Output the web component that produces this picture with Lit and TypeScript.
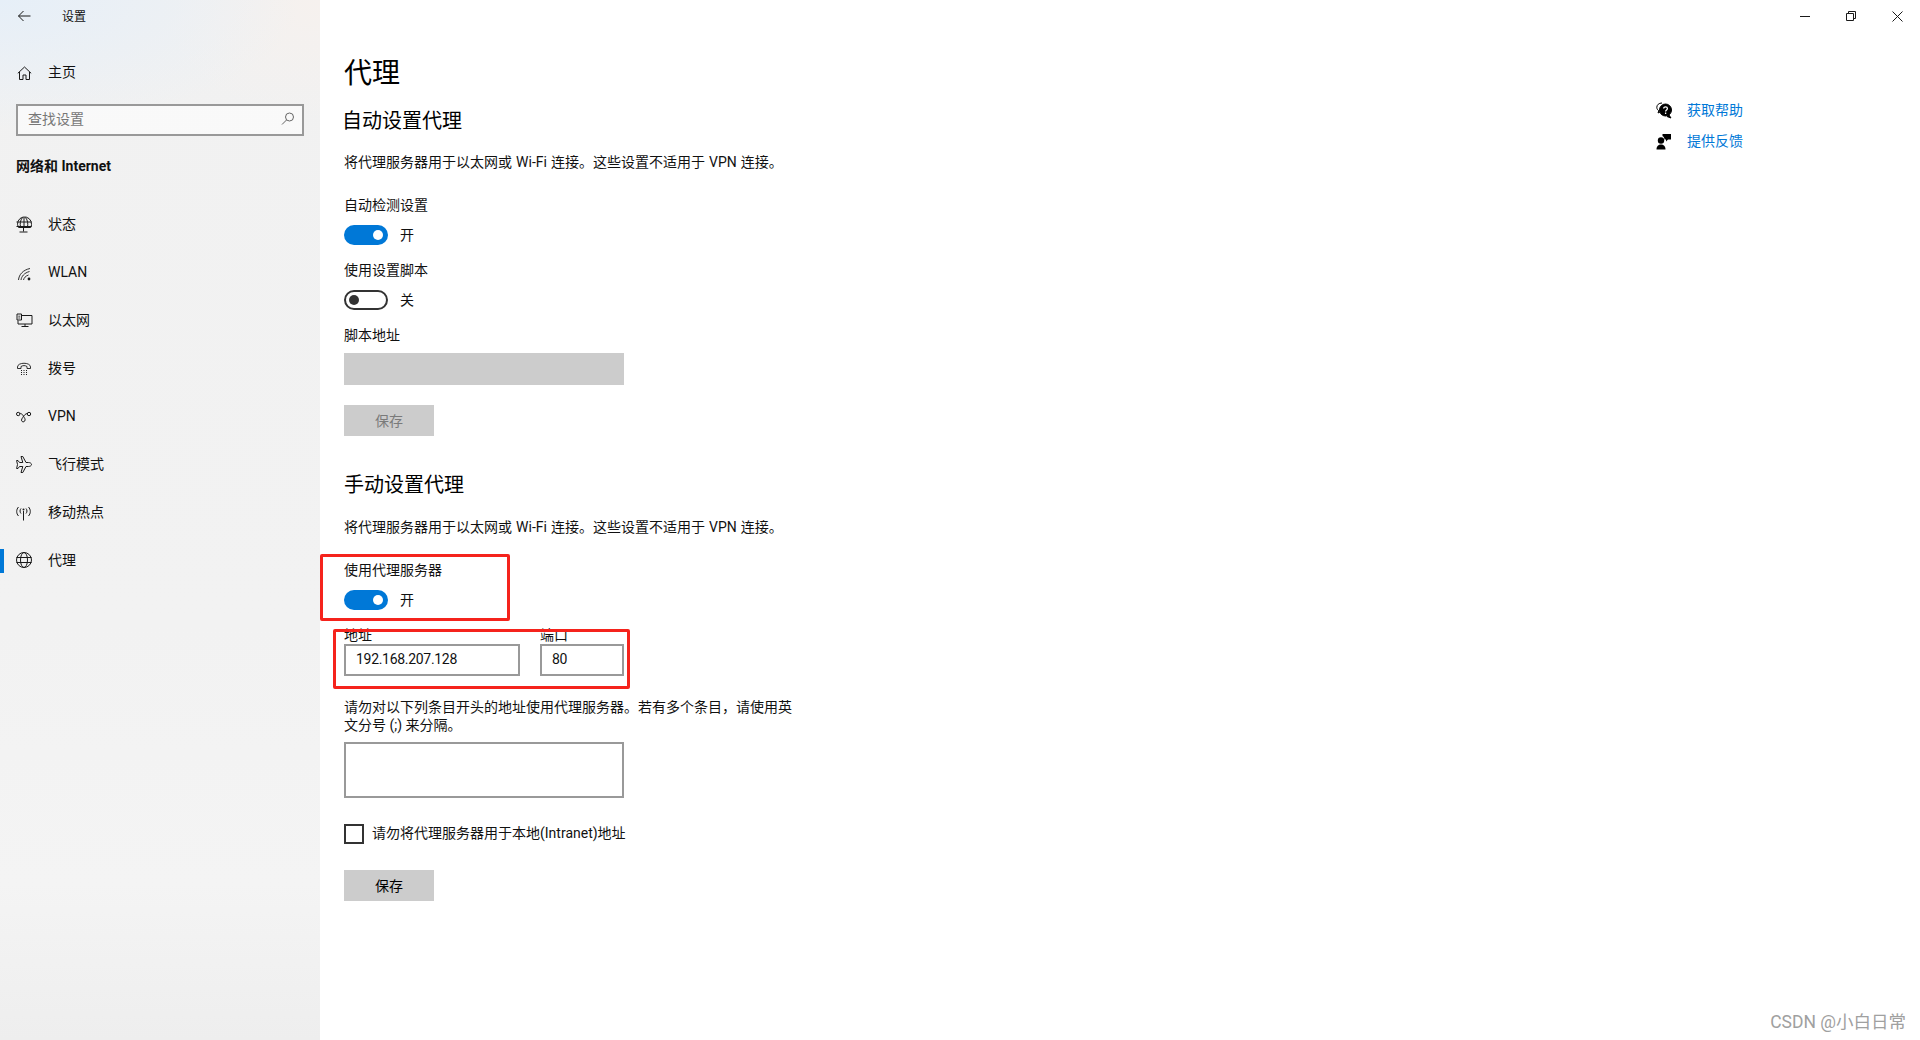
import { LitElement, html, css, svg } from "lit";
import { customElement } from "lit/decorators.js";

const S = (body: unknown, w = 20, h = 20) => html`<svg width=${w} height=${h} viewBox="0 0 ${w} ${h}" fill="none" stroke="#1a1a1a" stroke-width="1">${body}</svg>`;

const icons: Record<string, unknown> = {
  status: S(svg`<path d="M2.500 12.500A7 7 0 1 1 15.500 9.500c0 1.200-.3 2.200-.8 3H2.900Z"/><path d="M.5 7h15M.5 11.500h15M8 2.500v10M4.500 12c-.6-3-.4-6.500 2-9.500M11.500 12c.6-3 .4-6.500-2-9.500M7.500 13v3.500M3.500 17h8"/>`),
  wlan: S(svg`<path d="M2.500 17C3 11.500 7 7 14 5.500M5 17C5.500 13.500 8 10 13.500 8.500M7.500 17c.4-2 2-4 5-5" stroke-width=".9"/><circle cx="13" cy="16" r="1.400" fill="#1a1a1a" stroke="none"/>`),
  eth: S(svg`<path d="M5.500 4.500h10.500v8.500H2V9.500M9 13v2.500M5.500 15.500h7"/><path d="M1 3h4.500v6H1z" fill="#f1f1f1"/><path d="M2.300 5.200h2M2.300 7h2" stroke-width=".8"/>`),
  dial: S(svg`<path d="M1.500 8c0-5 13-5 13 0v1.500h-3.500V7.500c-2-1.200-4-1.200-6 0v2H1.500Z" stroke-width=".9"/><path d="M5 11.500h1M7.500 11.500h1M10 11.500h1M5 13.500h1M7.500 13.500h1M10 13.500h1M5 15.500h1M7.500 15.500h1M10 15.500h1"/>`),
  vpn: S(svg`<circle cx="2.200" cy="7" r="1.700"/><circle cx="13" cy="7" r="1.700"/><path d="M3.800 6.500C6 6 7 8.500 8.800 11.500c1 1.700-.4 3.800-2 3.300-1.800-.6-1.600-2.300-.1-4.300 1.200-2 2.800-4 4.700-4"/>`),
  plane: S(svg`<path d="M15.500 9.500c0-1.200-1.500-2-3-2h-2.500L6.800 1.500H5L6.800 7.500H3.500L2 5.500H.6L1.500 9.500.6 13.500H2l1.500-2h3.300L5 17.500h1.800l3.200-6h2.500c1.500 0 3-.8 3-2Z"/>`),
  spot: S(svg`<path d="M7.500 8v9.500"/><circle cx="7.500" cy="6.500" r="1" fill="#1a1a1a" stroke="none"/><path d="M2.500 4c-2.400 2.500-2.400 6.500 0 9M12.500 4c2.400 2.500 2.400 6.500 0 9M5 5.500c-1.300 1.500-1.300 3.500 0 5M10 5.500c1.300 1.500 1.300 3.500 0 5"/>`),
  globe: S(svg`<circle cx="8" cy="9" r="7.500"/><ellipse cx="8" cy="9" rx="3.500" ry="7.500"/><path d="M.5 6.500h15M.5 11.500h15"/>`),
};

const nav = [
  ["status", "状态"], ["wlan", "WLAN"], ["eth", "以太网"], ["dial", "拨号"],
  ["vpn", "VPN"], ["plane", "飞行模式"], ["spot", "移动热点"], ["globe", "代理"],
];

@customElement("app-root")
export class AppRoot extends LitElement {
  static styles = css`
    :host { display: block; width: 1920px; height: 1040px; position: relative; overflow: hidden; background: #fff; color: #111;
      font-family: Roboto, "Noto Sans CJK SC", sans-serif; font-size: 14px; line-height: 20px; }
    .app { display: flex; height: 1040px; }
    .side { width: 320px; flex: none; display: flex; flex-direction: column;
      background:
        radial-gradient(300px 130px at 0 0, #e6eff8 0%, rgba(230,239,248,0) 100%),
        radial-gradient(160px 120px at 100% 0, #f6f1ee 0%, rgba(246,241,238,0) 100%),
        linear-gradient(180deg, #f1f1f1 0%, #f2f2f2 60%, #f4f4f4 85%, #eeeeee 100%); }
    .back { height: 32px; display: flex; align-items: center; padding-left: 17px; font-size: 12px; }
    .back span { margin-left: 31px; padding-top: 1px; }
    .home { margin-top: 17px; height: 48px; display: flex; align-items: center; padding-left: 17px; }
    .home span { margin-left: 16px; padding-bottom: 2px; }
    .search { margin: 7px 16px 0; height: 32px; box-sizing: border-box; border: 2px solid #999; background: rgba(255,255,255,.6);
      display: flex; align-items: center; justify-content: space-between; padding: 0 7px 2px 10px; color: #777; }
    .cat { margin: 20px 16px 0; font-weight: 700; font-size: 14px; line-height: 20px; height: 20px; }
    .nav { margin-top: 25px; display: flex; flex-direction: column; }
    .item { height: 48px; display: flex; align-items: center; position: relative; padding-left: 16px; }
    .item .ic { width: 32px; height: 20px; display: flex; align-items: center; }
    .item span { padding-bottom: 2px; }
    .item.active::before { content: ""; position: absolute; left: 0; top: 12px; width: 4px; height: 24px; background: #0078d7; }
    .main { flex: 1; padding: 54px 0 0 24px; display: flex; justify-content: space-between; }
    .col { width: 480px; }
    h1 { margin: 0; font-size: 28px; line-height: 40px; font-weight: 400; color: #000; }
    h2 { margin: 13px 0 0 -2px; font-size: 20px; line-height: 28px; font-weight: 400; color: #000; }
    h2.second { margin: 35px 0 0; }
    .desc { margin-top: 18px; line-height: 18px; padding-bottom: 2px; word-spacing: .6px; }
    .second + .desc { margin-top: 19px; }
    .lab { margin-top: 16px; line-height: 18px; padding-bottom: 2px; }
    .lab.first { margin-top: 23px; }
    .tog { margin-top: 9px; height: 20px; display: flex; align-items: center; }
    .sw { width: 44px; height: 20px; box-sizing: border-box; border-radius: 10px; position: relative; margin-right: 12px; }
    .sw::after { content: ""; position: absolute; top: 50%; width: 10px; height: 10px; margin-top: -5px; border-radius: 50%; }
    .sw.on { background: #0078d7; }
    .sw.on::after { right: 5px; background: #fff; }
    .sw.off { border: 2px solid #333; }
    .sw.off::after { left: 3px; background: #333; }
    .disabled { margin-top: 7px; width: 280px; height: 32px; background: #ccc; }
    .btn { margin-top: 20px; width: 90px; height: 31px; background: #ccc; display: flex; align-items: center; justify-content: center; color: #000; }
    .btn.off { color: #7a7a7a; }
    .btn.last { margin-top: 26px; }
    .pair { margin-top: 16px; display: flex; gap: 20px; width: 280px; }
    .pair .lb { height: 18px; line-height: 18px; }
    .field { box-sizing: border-box; height: 32px; border: 2px solid #999; display: flex; align-items: center; padding: 0 0 2px 10px; letter-spacing: -.3px; }
    .f1 { width: 176px; } .f2 { width: 84px; }
    .note { margin-top: 22px; width: 460px; line-height: 18px; }
    .area { margin-top: 8px; width: 280px; height: 56px; box-sizing: border-box; border: 2px solid #999; }
    .chk { margin-top: 26px; display: flex; align-items: center; height: 20px; }
    .chk span { padding-bottom: 2px; }
    .box { width: 20px; height: 20px; box-sizing: border-box; border: 2px solid #333; margin-right: 8px; }
    .aside { width: 264px; padding-top: 46px; }
    .link { display: flex; align-items: center; height: 20px; margin-bottom: 11px; color: #0078d7; }
    .link svg { margin-right: 16px; flex: none; }
    .link span { margin-left: -1px; }
    .winbtns { position: absolute; top: 0; right: 0; display: flex; }
    .winbtns div { width: 46px; height: 32px; display: flex; align-items: center; justify-content: center; }
    .mark { position: absolute; border: 3px solid #f5231c; border-radius: 2px; box-sizing: border-box; }
    .m1 { left: 320px; top: 554px; width: 190px; height: 67px; }
    .m2 { left: 333px; top: 629px; width: 297px; height: 60px; }
    .wm { position: absolute; right: 14px; top: 1011px; font-size: 17.5px; line-height: 22px; color: #a0a0a0; }
  `;

  toggle(on: boolean) {
    return html`<div class="tog"><div class="sw ${on ? "on" : "off"}"></div>${on ? "开" : "关"}</div>`;
  }

  render() {
    const desc = "将代理服务器用于以太网或 Wi-Fi 连接。这些设置不适用于 VPN 连接。";
    return html`
      <div class="app">
        <div class="side">
          <div class="back">
            ${S(svg`<path d="M1.500 8H13.500M6.500 3L1.500 8l5 5"/>`, 14, 16)}
            <span>设置</span>
          </div>
          <div class="home">
            ${S(svg`<path d="M.8 7.300L7.500 1l6.700 6.300M2.500 6v7.500h3.500V9h3v4.500h3.500V6"/>`, 15, 15)}
            <span>主页</span>
          </div>
          <div class="search">查找设置
            ${S(svg`<circle cx="8.500" cy="5" r="4" stroke="#666"/><path d="M5.500 8L1 12.500" stroke="#666"/>`, 14, 14)}
          </div>
          <div class="cat">网络和 Internet</div>
          <div class="nav">
            ${nav.map(([k, t]) => html`<div class="item ${k === "globe" ? "active" : ""}"><div class="ic">${icons[k]}</div><span>${t}</span></div>`)}
          </div>
        </div>
        <div class="main">
          <div class="col">
            <h1>代理</h1>
            <h2>自动设置代理</h2>
            <div class="desc">${desc}</div>
            <div class="lab first">自动检测设置</div>
            ${this.toggle(true)}
            <div class="lab">使用设置脚本</div>
            ${this.toggle(false)}
            <div class="lab">脚本地址</div>
            <div class="disabled"></div>
            <div class="btn off">保存</div>
            <h2 class="second">手动设置代理</h2>
            <div class="desc">${desc}</div>
            <div class="lab first">使用代理服务器</div>
            ${this.toggle(true)}
            <div class="pair">
              <div><div class="lb">地址</div><div class="field f1">192.168.207.128</div></div>
              <div><div class="lb">端口</div><div class="field f2">80</div></div>
            </div>
            <div class="note">请勿对以下列条目开头的地址使用代理服务器。若有多个条目，请使用英文分号 (;) 来分隔。</div>
            <div class="area"></div>
            <div class="chk"><div class="box"></div><span>请勿将代理服务器用于本地(Intranet)地址</span></div>
            <div class="btn last">保存</div>
          </div>
          <div class="aside">
            <div class="link">
              <svg width="16" height="17" viewBox="0 0 16 17" fill="none" stroke="#000">
                <path d="M6 1C2.800 1 .8 3 .8 5.300c0 1.500.8 2.700 2 3.500L2 11l3-1.500" stroke-width="1"/>
                <circle cx="9.500" cy="8" r="6" fill="#000"/>
                <path d="M13 13l2 3-4-1.500Z" fill="#000"/>
                <path d="M7.700 6.500c0-2.300 3.700-2.300 3.700 0 0 1.400-1.800 1.400-1.800 3M9.600 10.500v1.500" stroke="#fff" stroke-width="1.300"/>
              </svg><span>获取帮助</span>
            </div>
            <div class="link">
              <svg width="16" height="17" viewBox="0 0 16 17" fill="#000" stroke="none">
                <circle cx="5" cy="7.500" r="3.200"/>
                <path d="M.5 16.500c0-3.500 2-5 4.500-5s4.500 1.500 4.500 5Z"/>
                <path d="M6.500 1h8.500v5.500h-3l-2 2V6.500h-1.500c0-2-1-3-2-3.500Z"/>
              </svg><span>提供反馈</span>
            </div>
          </div>
        </div>
      </div>
      <div class="winbtns">
        <div>${S(svg`<path d="M0 5.500h10"/>`, 10, 10)}</div>
        <div>${S(svg`<path d="M.5 2.500h7v7h-7zM2.500 2.500v-2h7v7h-2"/>`, 10, 10)}</div>
        <div>${S(svg`<path d="M.5.500l10 10M10.500.500l-10 10"/>`, 11, 11)}</div>
      </div>
      <div class="mark m1"></div>
      <div class="mark m2"></div>
      <div class="wm">CSDN @小白日常</div>
    `;
  }
}
